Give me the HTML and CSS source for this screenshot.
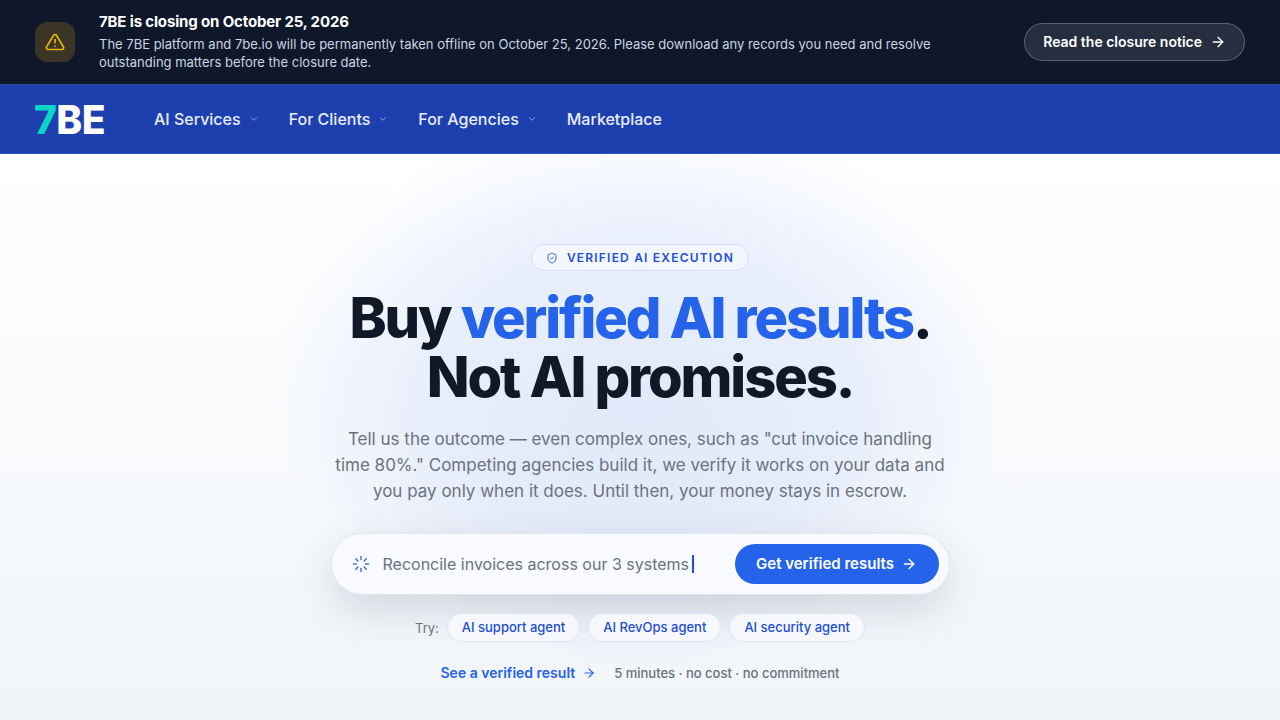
FILE: index.html
```html
<!DOCTYPE html>
<html lang="en">
<head>
  <meta charset="UTF-8" />
  <title>7BE - Buy verified AI results</title>
  <link rel="stylesheet" href="styles.css">
</head>
<body>
  <!-- Closure banner -->
  <div class="notice">
    <div class="notice-icon">
      <svg width="20" height="20" viewBox="0 0 24 24" fill="none" stroke="#eab308" stroke-width="2" stroke-linecap="round" stroke-linejoin="round">
        <path d="M10.3 3.9 1.8 18a2 2 0 0 0 1.7 3h17a2 2 0 0 0 1.7-3L13.7 3.9a2 2 0 0 0-3.4 0z"/>
        <path d="M12 9v4"/>
        <path d="M12 17h.01"/>
      </svg>
    </div>
    <div class="notice-text">
      <div class="notice-title">7BE is closing on October 25, 2026</div>
      <p>The 7BE platform and 7be.io will be permanently taken offline on October 25, 2026. Please download any records you need and resolve outstanding matters before the closure date.</p>
    </div>
    <a class="notice-btn">Read the closure notice
      <svg width="16" height="16" viewBox="0 0 24 24" fill="none" stroke="currentColor" stroke-width="2" stroke-linecap="round" stroke-linejoin="round"><path d="M5 12h14"/><path d="m12 5 7 7-7 7"/></svg>
    </a>
  </div>

  <!-- Nav -->
  <nav class="nav">
    <div class="logo"><span>7</span>BE</div>
    <div class="nav-links">
      <a class="nav-link">AI Services
        <svg class="chev" width="10" height="10" viewBox="0 0 24 24" fill="none" stroke="currentColor" stroke-width="2" stroke-linecap="round" stroke-linejoin="round"><path d="m6 9 6 6 6-6"/></svg>
      </a>
      <a class="nav-link">For Clients
        <svg class="chev" width="10" height="10" viewBox="0 0 24 24" fill="none" stroke="currentColor" stroke-width="2" stroke-linecap="round" stroke-linejoin="round"><path d="m6 9 6 6 6-6"/></svg>
      </a>
      <a class="nav-link">For Agencies
        <svg class="chev" width="10" height="10" viewBox="0 0 24 24" fill="none" stroke="currentColor" stroke-width="2" stroke-linecap="round" stroke-linejoin="round"><path d="m6 9 6 6 6-6"/></svg>
      </a>
      <a class="nav-link">Marketplace</a>
    </div>
  </nav>

  <!-- Hero -->
  <main class="hero">
    <div class="badge">
      <svg width="12" height="12" viewBox="0 0 24 24" fill="none" stroke="#3f68c9" stroke-width="2" stroke-linecap="round" stroke-linejoin="round"><path d="M20 13c0 5-3.5 7.5-7.7 9a1 1 0 0 1-.6 0C7.5 20.500 4 18 4 13V6a1 1 0 0 1 1-1c2 0 4.500-1.200 6.200-2.700a1.200 1.200 0 0 1 1.600 0C14.500 3.800 17 5 19 5a1 1 0 0 1 1 1z"/><path d="m9 12 2 2 4-4"/></svg>
      VERIFIED AI EXECUTION
    </div>
    <h1>Buy <span>verified AI results</span>.<br />Not AI promises.</h1>
    <p class="lead">Tell us the outcome — even complex ones, such as "cut invoice handling time 80%." Competing agencies build it, we verify it works on your data and you pay only when it does. Until then, your money stays in escrow.</p>

    <div class="search">
      <svg class="spinner" width="18" height="18" viewBox="0 0 24 24" fill="none" stroke="currentColor" stroke-width="2" stroke-linecap="round"><path d="M12 2v4"/><path d="m16.200 7.800 2.900-2.900"/><path d="M18 12h4"/><path d="m16.200 16.200 2.900 2.900"/><path d="M12 18v4"/><path d="m4.900 19.100 2.900-2.900"/><path d="M2 12h4"/><path d="m4.900 4.900 2.900 2.900"/></svg>
      <div class="search-text">Reconcile invoices across our 3 systems<span class="caret"></span></div>
      <button class="search-btn">Get verified results
        <svg width="16" height="16" viewBox="0 0 24 24" fill="none" stroke="currentColor" stroke-width="2" stroke-linecap="round" stroke-linejoin="round"><path d="M5 12h14"/><path d="m12 5 7 7-7 7"/></svg>
      </button>
    </div>

    <div class="try">
      <span class="try-label">Try:</span>
      <a class="chip">AI support agent</a>
      <a class="chip">AI RevOps agent</a>
      <a class="chip">AI security agent</a>
    </div>

    <div class="foot">
      <a class="foot-link">See a verified result
        <svg width="14" height="14" viewBox="0 0 24 24" fill="none" stroke="currentColor" stroke-width="2" stroke-linecap="round" stroke-linejoin="round"><path d="M5 12h14"/><path d="m12 5 7 7-7 7"/></svg>
      </a>
      <span class="foot-note">5 minutes · no cost · no commitment</span>
    </div>
  </main>
</body>
</html>
```

FILE: styles.css
```css
* {
  box-sizing: border-box;
  margin: 0;
  padding: 0;
  font-family: 'Inter', sans-serif;
}

body {
  height: 720px;
  overflow: hidden;
  display: flex;
  flex-direction: column;
  background: #f1f5f9;
}

.notice {
  height: 84px;
  background-color: #0f172a;
  padding: 0 35px;
  display: flex;
  align-items: center;
  gap: 24px;
  flex-shrink: 0;
}

.notice-icon {
  width: 40px;
  height: 40px;
  border-radius: 12px;
  background-color: #3a3527;
  display: flex;
  justify-content: center;
  align-items: center;
  flex-shrink: 0;
}

.notice-text {
  width: 840px;
  padding-bottom: 2px;
  color: #cbd5e1;
}

.notice-title {
  color: #fff;
  font-size: 15px;
  font-weight: 700;
  line-height: 20px;
  letter-spacing: -0.15px;
  margin-bottom: 3px;
}

.notice-text p {
  font-size: 13px;
  line-height: 18px;
}

.notice-btn {
  margin-left: auto;
  height: 38px;
  padding: 0 18px 1px;
  display: flex;
  align-items: center;
  gap: 8px;
  border: 1px solid rgba(255, 255, 255, 0.25);
  border-radius: 19px;
  background-color: rgba(255, 255, 255, 0.1);
  color: #fff;
  font-size: 14px;
  font-weight: 600;
}

.nav {
  height: 70px;
  background-color: #1e40af;
  border-top: 1px solid #2a4a9a;
  border-bottom: 1px solid #2f55c4;
  padding: 0 35px;
  display: flex;
  align-items: center;
  flex-shrink: 0;
}

.logo {
  width: 120px;
  margin-left: -1px;
  color: #fff;
  font-size: 39px;
  font-weight: 800;
  letter-spacing: -0.6px;
}

.logo span {
  color: #0ad6c8;
}

.nav-links {
  display: flex;
  gap: 30px;
}

.nav-link {
  display: flex;
  align-items: center;
  gap: 8px;
  color: #e6edfd;
  font-size: 16px;
  font-weight: 500;
}

.chev {
  color: #a9bcf0;
}

.hero {
  flex: 1;
  padding-top: 90px;
  display: flex;
  flex-direction: column;
  align-items: center;
  background:
    radial-gradient(ellipse 365px 280px at 640px 235px, rgba(37, 99, 235, 0.11), rgba(37, 99, 235, 0.085) 55%, rgba(37, 99, 235, 0)),
    linear-gradient(#fff, #f1f5f9);
}

.badge {
  height: 27px;
  padding: 0 14px;
  display: flex;
  align-items: center;
  gap: 9px;
  border: 1px solid #d5e0f7;
  border-radius: 14px;
  background-color: #f3f6fd;
  color: #1d4ed8;
  font-size: 12px;
  font-weight: 600;
  letter-spacing: 1.2px;
}

h1 {
  margin-top: 18px;
  color: #111827;
  font-size: 56px;
  font-weight: 800;
  line-height: 59px;
  letter-spacing: -2.1px;
  text-align: center;
}

h1 span {
  color: #2563eb;
}

.lead {
  margin-top: 19px;
  width: 620px;
  color: #6b7280;
  font-size: 17px;
  line-height: 26px;
  text-align: center;
}

.search {
  margin-top: 29px;
  width: 619px;
  height: 62px;
  padding: 0 10px 0 20px;
  display: flex;
  align-items: center;
  border: 1px solid #e2e8f0;
  border-radius: 31px;
  background-color: #f8fafd;
  box-shadow: 0 16px 44px rgba(15, 23, 42, 0.14);
}

.spinner {
  color: #4a72d8;
  flex-shrink: 0;
}

.search-text {
  flex: 1;
  margin-left: 13px;
  display: flex;
  align-items: center;
  color: #6b7280;
  font-size: 16px;
}

.caret {
  width: 2px;
  height: 18px;
  margin-left: 3px;
  background-color: #1d4ed8;
}

.search-btn {
  width: 204px;
  height: 40px;
  padding-bottom: 1px;
  border: none;
  border-radius: 20px;
  background-color: #2563eb;
  color: #fff;
  font-size: 15px;
  font-weight: 600;
  display: flex;
  justify-content: center;
  align-items: center;
  gap: 7px;
}

.try {
  margin-top: 18px;
  display: flex;
  align-items: center;
  gap: 8px;
}

.try-label {
  color: #6b7280;
  font-size: 13px;
}

.chip {
  height: 29px;
  padding: 0 14px 1px;
  display: flex;
  align-items: center;
  border: 1px solid #dbe4f5;
  border-radius: 15px;
  background-color: #f6f8fd;
  color: #1d4ed8;
  font-size: 13px;
  font-weight: 500;
}

.foot {
  margin-top: 22px;
  display: flex;
  align-items: center;
  gap: 18px;
}

.foot-link {
  display: flex;
  align-items: center;
  gap: 7px;
  color: #2563eb;
  font-size: 14px;
  font-weight: 600;
}

.foot-note {
  color: #6b7280;
  font-size: 13px;
  font-weight: 500;
}
```
